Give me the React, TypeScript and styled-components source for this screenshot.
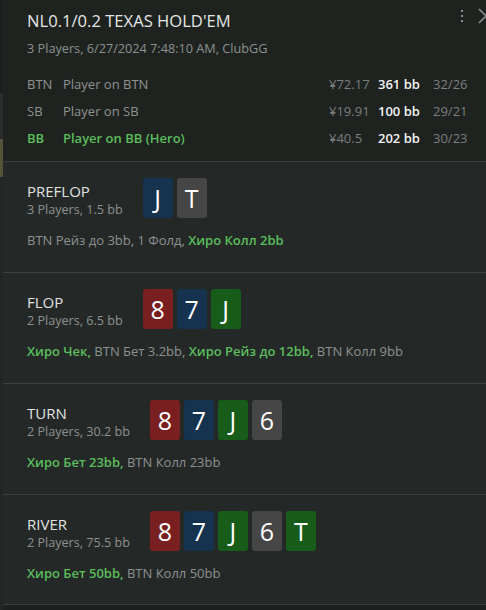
import styled, { createGlobalStyle } from 'styled-components';

const Global = createGlobalStyle`
  html, body {
    margin: 0;
    padding: 0;
    background: #1d201f;
  }
  body {
    font-family: 'Open Sans', 'Noto Sans', sans-serif;
  }
`;

const Screen = styled.div`
  width: 486px;
  height: 610px;
  display: flex;
  overflow: hidden;
  background: #1d201f;
`;

const Strip = styled.div`
  width: 3px;
  flex: none;
  background: linear-gradient(
    to bottom,
    #1b1e1c 0px,
    #1b1e1c 93px,
    #2a2d2b 93px,
    #2a2d2b 139px,
    #55533a 139px,
    #55533a 177px,
    #222624 177px,
    #222624 100%
  );
`;

const Panel = styled.div`
  flex: 1;
  display: flex;
  flex-direction: column;
  min-width: 0;
`;

const Header = styled.div`
  position: relative;
  height: 162px;
  box-sizing: border-box;
  padding: 9px 0 0 24px;
  background: #1e2320;
  border-bottom: 1px solid #3b403e;
`;

const Title = styled.div`
  font-size: 16.6px;
  color: #e4e6e5;
  line-height: 24px;
`;

const Sub = styled.div`
  font-size: 12.7px;
  color: #8d918f;
  line-height: 18px;
  margin-top: 6px;
`;

const Tools = styled.div`
  position: absolute;
  top: 8px;
  right: -2px;
  display: flex;
  align-items: center;
  gap: 12px;
  color: #8a8e8c;
`;

const Players = styled.div`
  display: grid;
  grid-template-columns: 36px 266px 49px 55px auto;
  margin-top: 18px;
  row-gap: 9px;
  font-size: 13px;
  line-height: 18px;
`;

const Cell = styled.div<{ $hero?: boolean; $strong?: boolean; $dim?: boolean }>`
  color: ${(p) => (p.$hero ? '#5cbd5c' : p.$strong ? '#f2f2f2' : p.$dim ? '#7b7f7d' : '#8f9391')};
  font-weight: ${(p) => (p.$hero || p.$strong ? 600 : 400)};
  white-space: nowrap;
`;

const Section = styled.div`
  height: 111px;
  box-sizing: border-box;
  padding: 16px 0 0 24px;
  background: #242928;
  border-bottom: 1px solid #3b403e;
  &:last-child {
    height: 110px;
  }
`;

const StreetRow = styled.div`
  display: flex;
  align-items: center;
  gap: 20px;
`;

const StreetInfo = styled.div`
  display: flex;
  flex-direction: column;
  padding-top: 2px;
`;

const StreetName = styled.div`
  font-size: 15px;
  line-height: 20px;
  color: #e0e2e1;
`;

const StreetSub = styled.div`
  font-size: 12.6px;
  line-height: 17px;
  color: #8d918f;
`;

const Cards = styled.div`
  display: flex;
  gap: 4px;
`;

const suitColors: Record<string, string> = {
  h: '#7a1f1f',
  d: '#15334f',
  c: '#185c19',
  s: '#464646',
};

const Card = styled.div<{ $suit: string }>`
  width: 30px;
  height: 40px;
  border-radius: 3px;
  background: ${(p) => suitColors[p.$suit]};
  color: #ffffff;
  font-size: 25px;
  line-height: 40px;
  text-align: center;
`;

const Actions = styled.div`
  margin-top: 13px;
  font-size: 13px;
  line-height: 18px;
  color: #8d918f;
`;

const Hero = styled.span`
  color: #5cbd5c;
  font-weight: 600;
`;

const players = [
  { pos: 'BTN', name: 'Player on BTN', money: '¥72.17', bb: '361 bb', stat: '32/26' },
  { pos: 'SB', name: 'Player on SB', money: '¥19.91', bb: '100 bb', stat: '29/21' },
  { pos: 'BB', name: 'Player on BB (Hero)', money: '¥40.5', bb: '202 bb', stat: '30/23', hero: true },
];

type Part = { t: string; hero?: boolean };

const streets: { name: string; sub: string; cards: [string, string][]; actions: Part[] }[] = [
  {
    name: 'PREFLOP',
    sub: '3 Players, 1.5 bb',
    cards: [['J', 'd'], ['T', 's']],
    actions: [{ t: 'BTN Рейз до 3bb, 1 Фолд, ' }, { t: 'Хиро Колл 2bb', hero: true }],
  },
  {
    name: 'FLOP',
    sub: '2 Players, 6.5 bb',
    cards: [['8', 'h'], ['7', 'd'], ['J', 'c']],
    actions: [
      { t: 'Хиро Чек,', hero: true },
      { t: ' BTN Бет 3.2bb, ' },
      { t: 'Хиро Рейз до 12bb,', hero: true },
      { t: ' BTN Колл 9bb' },
    ],
  },
  {
    name: 'TURN',
    sub: '2 Players, 30.2 bb',
    cards: [['8', 'h'], ['7', 'd'], ['J', 'c'], ['6', 's']],
    actions: [{ t: 'Хиро Бет 23bb,', hero: true }, { t: ' BTN Колл 23bb' }],
  },
  {
    name: 'RIVER',
    sub: '2 Players, 75.5 bb',
    cards: [['8', 'h'], ['7', 'd'], ['J', 'c'], ['6', 's'], ['T', 'c']],
    actions: [{ t: 'Хиро Бет 50bb,', hero: true }, { t: ' BTN Колл 50bb' }],
  },
];

export default function App() {
  return (
    <Screen>
      <Global />
      <Strip />
      <Panel>
        <Header>
          <Title>NL0.1/0.2 TEXAS HOLD'EM</Title>
          <Sub>3 Players, 6/27/2024 7:48:10 AM, ClubGG</Sub>
          <Tools>
            <svg width="4" height="14" viewBox="0 0 4 14">
              <rect x="1" y="1" width="2" height="2" fill="currentColor" />
              <rect x="1" y="6" width="2" height="2" fill="currentColor" />
              <rect x="1" y="11" width="2" height="2" fill="currentColor" />
            </svg>
            <svg width="12" height="16" viewBox="0 0 12 16">
              <path d="M3 1 L10 8 L3 15" stroke="currentColor" strokeWidth="1.6" fill="none" />
            </svg>
          </Tools>
          <Players>
            {players.map((p) => (
              <>
                <Cell key={p.pos + 'a'} $hero={p.hero}>{p.pos}</Cell>
                <Cell key={p.pos + 'b'} $hero={p.hero}>{p.name}</Cell>
                <Cell key={p.pos + 'c'} $dim>{p.money}</Cell>
                <Cell key={p.pos + 'd'} $strong>{p.bb}</Cell>
                <Cell key={p.pos + 'e'} $dim>{p.stat}</Cell>
              </>
            ))}
          </Players>
        </Header>
        {streets.map((s) => (
          <Section key={s.name}>
            <StreetRow>
              <StreetInfo>
                <StreetName>{s.name}</StreetName>
                <StreetSub>{s.sub}</StreetSub>
              </StreetInfo>
              <Cards>
                {s.cards.map(([r, suit], i) => (
                  <Card key={i} $suit={suit}>{r}</Card>
                ))}
              </Cards>
            </StreetRow>
            <Actions>
              {s.actions.map((a, i) => (a.hero ? <Hero key={i}>{a.t}</Hero> : <span key={i}>{a.t}</span>))}
            </Actions>
          </Section>
        ))}
      </Panel>
    </Screen>
  );
}
